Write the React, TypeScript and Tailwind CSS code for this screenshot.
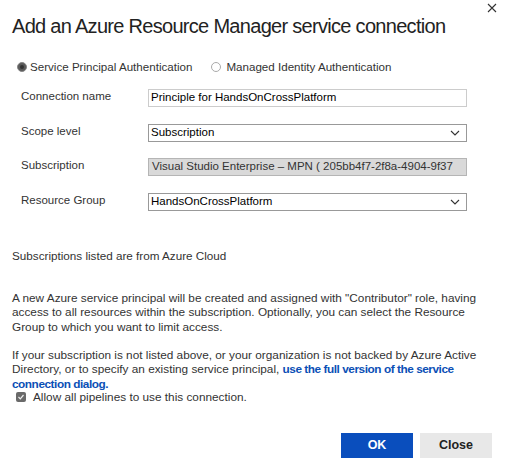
import React from "react";

function Chevron() {
  return (
    <svg width="10" height="6" viewBox="0 0 10 6" className="shrink-0">
      <path d="M1 1 L5 5 L9 1" fill="none" stroke="#333" strokeWidth="1.1" />
    </svg>
  );
}

export default function App() {
  return (
    <div
      className="relative w-[511px] h-[468px] bg-white text-[#222] overflow-hidden"
      style={{ fontFamily: '"Liberation Sans", Arial, sans-serif' }}
    >
      <button className="absolute right-[12px] top-[1px] w-[14px] h-[14px] flex items-center justify-center">
        <svg width="10" height="10" viewBox="0 0 10 10">
          <path d="M1 1 L9 9 M9 1 L1 9" stroke="#333" strokeWidth="1.1" />
        </svg>
      </button>
      <div className="pl-[12px] pt-[14px]">
        <h1 className="text-[20px] leading-[24px] font-normal text-[#222] tracking-[-0.7px] whitespace-nowrap">
          Add an Azure Resource Manager service connection
        </h1>

        <div className="flex items-center mt-[22px] h-[14px] text-[11.6px] text-[#333] leading-[14px]">
          <span className="w-[10px] h-[10px] rounded-full bg-[#5a5a5a] border border-[#888] flex items-center justify-center ml-[5px]">
            <span className="w-[4px] h-[4px] rounded-full bg-[#333]" />
          </span>
          <span className="ml-[3px] whitespace-nowrap">Service Principal Authentication</span>
          <span className="w-[10px] h-[10px] rounded-full border border-[#aaa] bg-white ml-[19px]" />
          <span className="ml-[5px] whitespace-nowrap">Managed Identity Authentication</span>
        </div>

        <div className="mt-[15px] ml-[9px] flex flex-col gap-[16.5px] text-[11.5px] text-[#333]">
          <div className="flex items-center h-[18px]">
            <span className="w-[127px] -mt-[2px]">Connection name</span>
            <div className="w-[319px] h-[18px] border border-[#ccc] flex items-center pl-[2px] text-black whitespace-nowrap">
              Principle for HandsOnCrossPlatform
            </div>
          </div>
          <div className="flex items-center h-[18px]">
            <span className="w-[127px] -mt-[2px]">Scope level</span>
            <div className="w-[319px] h-[18px] border border-[#999] flex items-center justify-between pl-[2px] pr-[6px] text-black">
              <span>Subscription</span>
              <Chevron />
            </div>
          </div>
          <div className="flex items-center h-[18px]">
            <span className="w-[127px] -mt-[2px]">Subscription</span>
            <div className="w-[319px] h-[18px] border border-[#b5b5b5] bg-[#d9d9d9] flex items-center pl-[3px] text-[#333] overflow-hidden whitespace-nowrap">
              Visual Studio Enterprise – MPN ( 205bb4f7-2f8a-4904-9f37
            </div>
          </div>
          <div className="flex items-center h-[18px]">
            <span className="w-[127px] -mt-[2px]">Resource Group</span>
            <div className="w-[319px] h-[18px] border border-[#999] flex items-center justify-between pl-[2px] pr-[6px] text-black">
              <span>HandsOnCrossPlatform</span>
              <Chevron />
            </div>
          </div>
        </div>

        <p className="mt-[38px] text-[11.7px] leading-[14px] text-[#333]">
          Subscriptions listed are from Azure Cloud
        </p>

        <p className="mt-[28px] text-[11.8px] leading-[14.5px] text-[#333] whitespace-nowrap">
          A new Azure service principal will be created and assigned with "Contributor" role, having
          <br />
          access to all resources within the subscription. Optionally, you can select the Resource
          <br />
          Group to which you want to limit access.
        </p>

        <p className="mt-[13.5px] text-[11.8px] leading-[14.5px] text-[#333] whitespace-nowrap">
          If your subscription is not listed above, or your organization is not backed by Azure Active
          <br />
          Directory, or to specify an existing service principal,{" "}
          <a className="text-[#0b4fb6] font-bold tracking-[-0.45px]">
            use the full version of the service
            <br />
            connection dialog.
          </a>
        </p>

        <div className="flex items-center -mt-[1px] h-[14px] ml-[4px] text-[11.8px] text-[#333] leading-[14px]">
          <span className="w-[10px] h-[10px] rounded-[2px] bg-[#6a6a6a] flex items-center justify-center">
            <svg width="8" height="8" viewBox="0 0 8 8">
              <path d="M1.5 4 L3.3 5.8 L6.5 2" fill="none" stroke="#eee" strokeWidth="1.2" />
            </svg>
          </span>
          <span className="ml-[7px] whitespace-nowrap">Allow all pipelines to use this connection.</span>
        </div>
      </div>

      <div className="absolute left-[341px] top-[433px] flex gap-[7px]">
        <button className="w-[72px] h-[25px] bg-[#0a4ebd] text-white text-[12.5px] font-bold">OK</button>
        <button className="w-[72px] h-[25px] bg-[#e8e8e8] text-[#222] text-[12.5px] font-bold">Close</button>
      </div>
    </div>
  );
}
